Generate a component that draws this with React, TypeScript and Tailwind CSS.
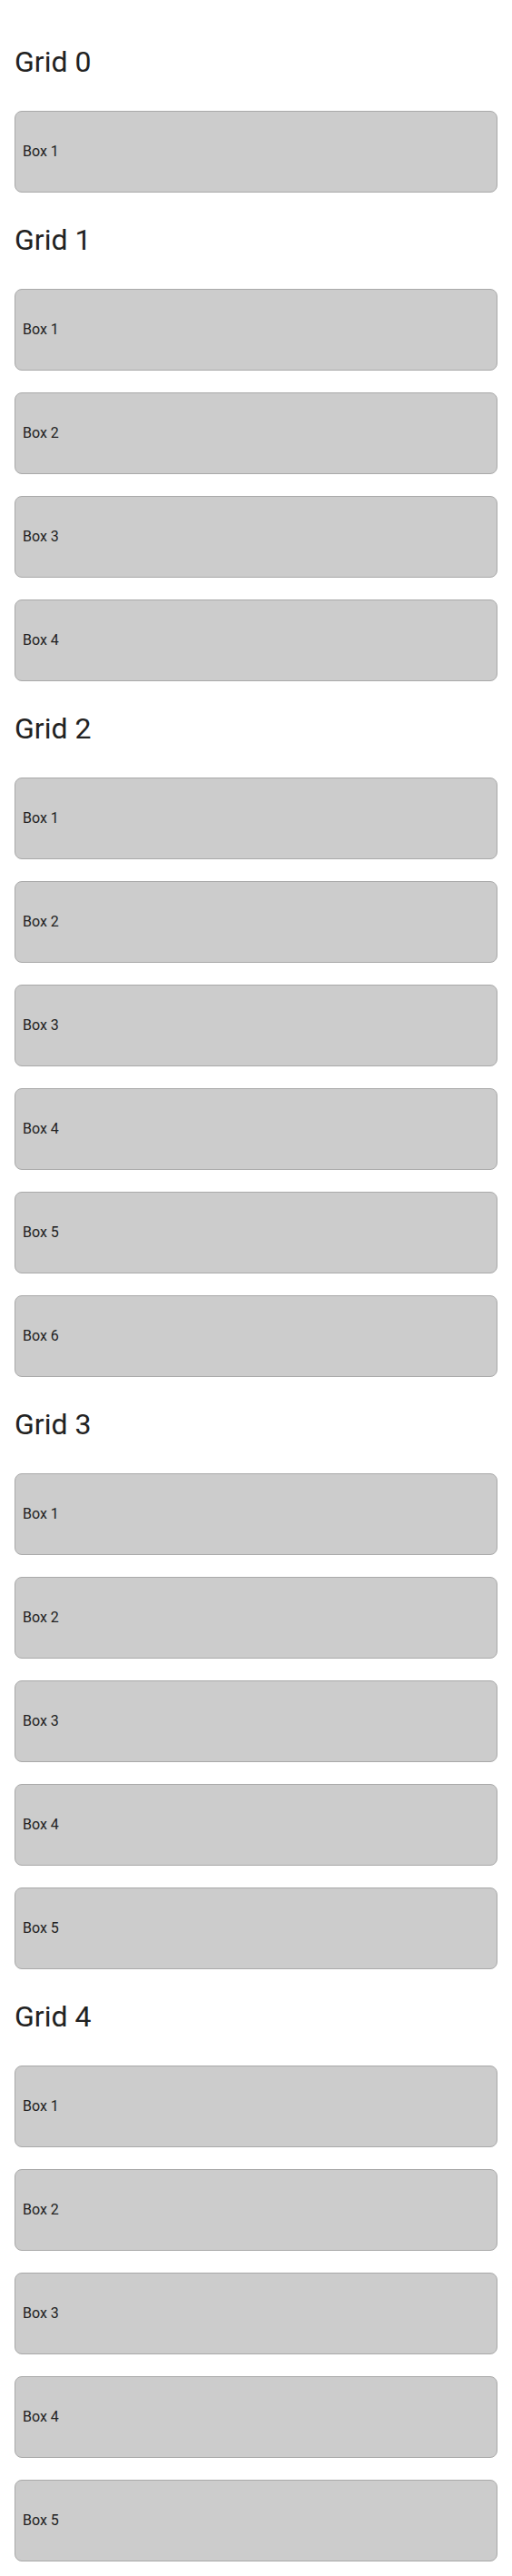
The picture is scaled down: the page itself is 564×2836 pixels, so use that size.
const grids = [1, 4, 6, 5, 5];

function Box({ label }: { label: string }) {
  return (
    <div className="flex h-[90px] items-center rounded-lg border border-[#a9a9a9] bg-[#cccccc] px-2 text-base text-[#222222]">
      {label}
    </div>
  );
}

export default function App() {
  return (
    <div className="flex flex-col gap-7 px-4 pt-[44px] pb-4 font-['Roboto',sans-serif] bg-white">
      {grids.map((count, g) => (
        <section key={g}>
          <h1 className="mb-[30px] text-[32px] leading-[48px] font-normal text-[#222222]">Grid {g}</h1>
          <div className="grid grid-cols-1 gap-6">
            {Array.from({ length: count }, (_, i) => (
              <Box key={i} label={`Box ${i + 1}`} />
            ))}
          </div>
        </section>
      ))}
    </div>
  );
}
